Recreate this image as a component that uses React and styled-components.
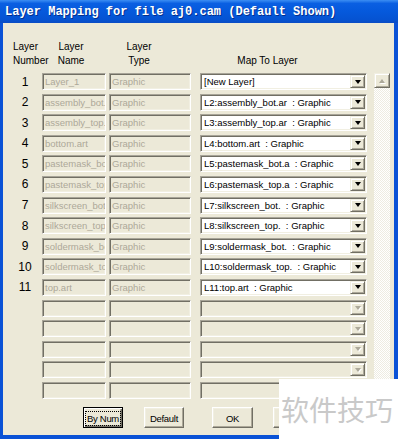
import React from 'react'
import styled, { createGlobalStyle, css } from 'styled-components'

const GlobalStyle = createGlobalStyle`
  html, body {
    margin: 0;
    padding: 0;
    background: #ffffff;
    overflow: hidden;
  }
  body {
    font-family: "Liberation Sans", Arial, sans-serif;
  }
`

const FACE = '#ECE9D8'

const sunken = css`
  box-sizing: border-box;
  border: 1px solid;
  border-color: #A7A498 #ffffff #ffffff #A7A498;
  box-shadow: inset 1px 1px 0 #716F64, inset -1px -1px 0 #F1EFE2;
`

const raised = css`
  box-sizing: border-box;
  border: 1px solid;
  border-color: #F1EFE2 #716F64 #716F64 #F1EFE2;
  box-shadow: inset 1px 1px 0 #ffffff, inset -1px -1px 0 #ACA899;
  background: ${FACE};
`

const Window = styled.div`
  position: relative;
  width: 398px;
  height: 439px;
  display: flex;
  flex-direction: column;
  background: #0A52D6;
  overflow: hidden;
`

const TitleBar = styled.div`
  height: 23px;
  flex: none;
  display: flex;
  align-items: center;
  padding-left: 5px;
  background: linear-gradient(to bottom, #3C8EF3 0%, #0A5FE2 15%, #0559DC 50%, #0553D2 85%, #0A4CC4 100%);
`

const Title = styled.div`
  font-family: "Liberation Mono", "DejaVu Sans Mono", monospace;
  font-weight: bold;
  font-size: 12px;
  color: #ffffff;
  white-space: pre;
  text-shadow: 1px 1px 0 rgba(0, 20, 90, 0.6);
`

const Frame = styled.div`
  flex: 1;
  margin: 0 4px 4px 3px;
  padding: 17px 0 0 5px;
  background: ${FACE};
  display: flex;
  flex-direction: column;
`

const HeaderRow = styled.div`
  display: flex;
  align-items: flex-end;
  height: 28px;
`

const Head = styled.div`
  width: ${p => p.$w}px;
  padding-left: ${p => p.$pl || 0}px;
  box-sizing: border-box;
  text-align: ${p => p.$align || 'center'};
  font-size: 10px;
  line-height: 14px;
  color: #000;
`

const Main = styled.div`
  display: flex;
  align-items: flex-start;
  margin-top: 5px;
`

const Rows = styled.div`
  display: flex;
  flex-direction: column;
  gap: 3.6px;
`

const Row = styled.div`
  display: flex;
  align-items: center;
  height: 17px;
`

const NumCell = styled.div`
  width: 34px;
  text-align: center;
  font-size: 12px;
  color: #000;
`

const Field = styled.div`
  ${sunken};
  width: ${p => p.$w}px;
  height: 17px;
  margin-left: ${p => p.$ml || 0}px;
  padding-left: 2px;
  font-size: 9.5px;
  line-height: 15px;
  color: #ACA899;
  white-space: nowrap;
  overflow: hidden;
`

const Combo = styled.div`
  ${sunken};
  width: 167px;
  height: 17px;
  margin-left: 9px;
  display: flex;
  align-items: center;
  background: ${p => (p.$disabled ? FACE : '#ffffff')};
`

const ComboText = styled.div`
  flex: 1;
  min-width: 0;
  padding-left: 3px;
  font-size: 9.5px;
  line-height: 15px;
  color: #000;
  white-space: pre;
  overflow: hidden;
`

const ArrowButton = styled.div`
  ${raised};
  flex: none;
  width: ${p => p.$w || 15}px;
  height: ${p => p.$h || 13}px;
  margin-right: ${p => p.$mr || 0}px;
  display: flex;
  align-items: center;
  justify-content: center;
`

const Triangle = styled.span`
  width: 0;
  height: 0;
  border-left: 3.5px solid transparent;
  border-right: 3.5px solid transparent;
  ${p => (p.$up ? 'border-bottom' : 'border-top')}: 4px solid ${p => (p.$disabled ? '#ACA899' : '#000')};
  ${p => p.$disabled && 'filter: drop-shadow(1px 1px 0 #ffffff);'}
`

const ScrollBar = styled.div`
  width: 16px;
  height: 326px;
  margin-left: 7px;
  display: flex;
  flex-direction: column;
`

const Track = styled.div`
  flex: 1;
  background-color: #F6F5F0;
  background-image: conic-gradient(#ffffff 25%, #EEECE2 0 50%, #ffffff 0 75%, #EEECE2 0);
  background-size: 2px 2px;
`

const ButtonBar = styled.div`
  display: flex;
  margin-top: 8px;
  padding-left: 75px;
`

const Button = styled.button`
  ${raised};
  width: ${p => p.$w}px;
  height: 21px;
  margin-left: ${p => p.$ml || 0}px;
  padding: 3px 1px 1px 1px;
  display: flex;
  align-items: stretch;
  font-family: "Liberation Sans", Arial, sans-serif;
  font-size: 9.5px;
  color: #000;
  white-space: nowrap;
  border-color: #ffffff #716F64 #716F64 #ffffff;
  box-shadow: inset -1px -1px 0 #ACA899, inset 1px 1px 0 #F1EFE2;
  ${p =>
    p.$default &&
    css`
      border-color: #000000;
      box-shadow: inset 1px 1px 0 #ffffff, inset -1px -1px 0 #716F64, inset -2px -2px 0 #ACA899;
    `}
`

const ButtonLabel = styled.span`
  flex: 1;
  display: flex;
  align-items: center;
  justify-content: center;
  letter-spacing: -0.3px;
  border: 1px dotted ${p => (p.$focus ? '#000' : 'transparent')};
`

const Watermark = styled.div`
  position: absolute;
  left: 279px;
  top: 379px;
  right: 0;
  bottom: 0;
  display: flex;
  align-items: center;
  padding-left: 2px;
  background: #ffffff;
  font-family: "Noto Sans CJK SC", sans-serif;
  font-size: 28px;
  color: #C9C9C9;
  white-space: nowrap;
`

const layers = [
  { name: 'Layer_1', map: '[New Layer]' },
  { name: 'assembly_bot.art', map: 'L2:assembly_bot.ar  : Graphic' },
  { name: 'assembly_top.art', map: 'L3:assembly_top.ar  : Graphic' },
  { name: 'bottom.art', map: 'L4:bottom.art  : Graphic' },
  { name: 'pastemask_bot.art', map: 'L5:pastemask_bot.a  : Graphic' },
  { name: 'pastemask_top.art', map: 'L6:pastemask_top.a  : Graphic' },
  { name: 'silkscreen_bot.art', map: 'L7:silkscreen_bot.  : Graphic' },
  { name: 'silkscreen_top.art', map: 'L8:silkscreen_top.  : Graphic' },
  { name: 'soldermask_bot.art', map: 'L9:soldermask_bot.  : Graphic' },
  { name: 'soldermask_top.art', map: 'L10:soldermask_top.  : Graphic' },
  { name: 'top.art', map: 'L11:top.art  : Graphic' },
]

const emptyRows = [0, 1, 2, 3, 4]

export default function App() {
  return (
    <Window>
      <GlobalStyle />
      <TitleBar>
        <Title>Layer Mapping for file aj0.cam (Default Shown)</Title>
      </TitleBar>
      <Frame>
        <HeaderRow>
          <Head $w={45} $pl={5} $align="left">Layer<br />Number</Head>
          <Head $w={36}>Layer<br />Name</Head>
          <Head $w={100}>Layer<br />Type</Head>
          <Head $w={157}>Map To Layer</Head>
        </HeaderRow>
        <Main>
          <Rows>
            {layers.map((l, i) => (
              <Row key={l.name}>
                <NumCell>{i + 1}</NumCell>
                <Field $w={64}>{l.name}</Field>
                <Field $w={82} $ml={3}>Graphic</Field>
                <Combo>
                  <ComboText>{l.map}</ComboText>
                  <ArrowButton $mr={1}>
                    <Triangle />
                  </ArrowButton>
                </Combo>
              </Row>
            ))}
            {emptyRows.map(k => (
              <Row key={'e' + k}>
                <NumCell />
                <Field $w={64} />
                <Field $w={82} $ml={3} />
                <Combo $disabled>
                  <ComboText />
                  <ArrowButton $mr={1}>
                    <Triangle $disabled />
                  </ArrowButton>
                </Combo>
              </Row>
            ))}
          </Rows>
          <ScrollBar>
            <ArrowButton $w={16} $h={15}>
              <Triangle $up $disabled />
            </ArrowButton>
            <Track />
            <ArrowButton $w={16} $h={15}>
              <Triangle $disabled />
            </ArrowButton>
          </ScrollBar>
        </Main>
        <ButtonBar>
          <Button $w={40} $default>
            <ButtonLabel $focus>By Num</ButtonLabel>
          </Button>
          <Button $w={40} $ml={21}>
            <ButtonLabel>Default</ButtonLabel>
          </Button>
          <Button $w={41} $ml={28}>
            <ButtonLabel>OK</ButtonLabel>
          </Button>
          <Button $w={41} $ml={20}>
            <ButtonLabel>Cancel</ButtonLabel>
          </Button>
        </ButtonBar>
      </Frame>
      <Watermark>软件技巧</Watermark>
    </Window>
  )
}
